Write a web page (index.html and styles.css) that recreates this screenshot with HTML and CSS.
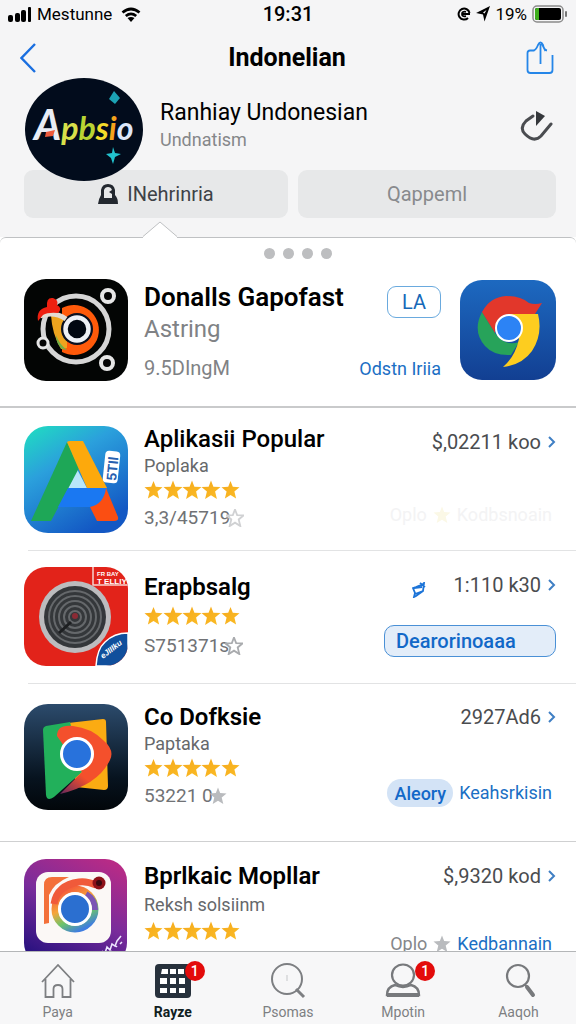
FILE: index.html
```html
<!DOCTYPE html>
<html lang="id">
  <head>
    <meta charset="UTF-8" />
    <meta name="viewport" content="width=device-width, initial-scale=1.0" />
    <title>Indonelian</title>
    <link rel="stylesheet" href="styles.css">
  </head>
  <body>
    <svg class="defs" aria-hidden="true">
      <defs>
        <linearGradient id="gold" x1="0" y1="0" x2="1" y2="1">
          <stop offset="0" stop-color="#f5a81c" />
          <stop offset="1" stop-color="#fbbd25" />
        </linearGradient>
        <symbol id="star" viewBox="0 0 20 20">
          <path d="M10 .5l2.4 6.2 7.1.4-5.4 4.5 1.8 7.4L10 15.2 4.1 19l1.800-7.400L.5 7.100l7.100-.4z" />
        </symbol>
        <symbol id="stars" viewBox="0 0 96 20">
          <use href="#star" width="19" height="20" />
          <use href="#star" x="19" width="20" height="20" />
          <use href="#star" x="38" width="20" height="20" />
          <use href="#star" x="57" width="20" height="20" />
          <use href="#star" x="77" width="19" height="20" />
        </symbol>
        <symbol id="chevron" viewBox="0 0 8 14">
          <path d="M1 2l5 5-5 5" fill="none" stroke="#3f7fc4" stroke-width="2" />
        </symbol>
      </defs>
    </svg>

    <header class="top">
      <div class="status">
        <div class="status-left">
          <svg width="24" height="16" viewBox="0 0 24 16">
            <rect x="0" y="9" width="5" height="7" rx="2" />
            <rect x="7" y="7" width="5" height="9" rx="2" />
            <rect x="13" y="4" width="5" height="12" rx="2" />
            <rect x="20" y="1" width="3" height="15" rx="1" />
          </svg>
          <span>Mestunne</span>
          <svg class="wifi" width="20" height="15" viewBox="0 0 20 15">
            <path d="M1.500 5.500q8.500-7 17 0M4.800 9q5.200-4.200 10.400 0" fill="none" stroke="#000" stroke-width="2.800" />
            <path d="M6.500 11q3.500-2.200 7 0L10 15z" />
          </svg>
        </div>
        <span class="clock">19:31</span>
        <div class="status-right">
          <svg width="14" height="14" viewBox="0 0 14 14">
            <path d="M12.500 6A5.500 5.500 0 1 0 11 11" fill="none" stroke="#000" stroke-width="2" />
            <path d="M4.500 7h8.500M9 4.800Q5 4 5 7t4 2.200" fill="none" stroke="#000" stroke-width="1.800" />
          </svg>
          <svg width="14" height="16" viewBox="0 0 14 16">
            <path d="M14 0L8.500 15.500 7 8.500 0 7zM10.500 4L7 6.500l1.500 1z" fill-rule="evenodd" />
          </svg>
          <span>19%</span>
          <svg width="36" height="18" viewBox="0 0 36 18">
            <rect x="1" y="1" width="30" height="16" rx="4" fill="#f5f5f6" stroke="#8b8b8b" stroke-width="1.500" />
            <rect x="3" y="3" width="26" height="12" rx="2" />
            <path d="M5 3h2v12H5a2 2 0 0 1-2-2V5a2 2 0 0 1 2-2z" fill="#3fae1d" />
            <rect x="33" y="6" width="2" height="6" rx="1" fill="#777" />
          </svg>
        </div>
      </div>

      <div class="nav">
        <a href="#" class="back" aria-label="Kembali">
          <svg width="16" height="30" viewBox="0 0 16 30">
            <path d="M15 1L1.500 15 15 29" fill="none" stroke="#1a6fe0" stroke-width="2.400" />
          </svg>
        </a>
        <h1>Indonelian</h1>
        <button class="icon-btn" aria-label="Bagikan">
          <svg width="28" height="34" viewBox="0 0 28 34">
            <path d="M8.500 9.500H4Q1.500 9.500 1.500 12v17q0 3 3 3h19q3 0 3-3V14M14.500 23V3M7.500 9.500Q10 9 12 4q2.500-5 5 0 1 5 4 5.500M16 3l3.500 7" fill="none" stroke="#2586e8" stroke-width="1.800" />
          </svg>
        </button>
      </div>

      <div class="profile">
        <svg class="avatar" width="118" height="103" viewBox="0 0 118 103">
          <ellipse cx="59" cy="51.500" rx="59" ry="51.500" fill="#020c1c" />
          <text x="9" y="62" class="avatar-text"><tspan fill="#e9edf5" class="avatar-cap">A</tspan><tspan fill="#d8e04a">p</tspan><tspan fill="#b9d433">b</tspan><tspan fill="#f4dc2a">s</tspan><tspan fill="#f5a31c">i</tspan><tspan fill="#dce6fa">o</tspan></text>
          <path d="M21 54l9-2-2 6-8 1z" fill="#ec5a3c" />
          <path d="M89 13l6 7-5 6-6-5z" fill="#1ca3b4" />
          <path d="M88 69l2 6 6 1-6 3-2 7-2-6-5-4 6-1z" fill="#22c3cf" />
        </svg>
        <div class="profile-text">
          <p class="profile-name">Ranhiay Undonesian</p>
          <p class="profile-sub">Undnatism</p>
        </div>
        <button class="icon-btn" aria-label="Muat ulang">
          <svg width="34" height="34" viewBox="0 0 34 34">
            <path d="M13 7L6 12Q-1 19 5 25q9 9 16 2L31 15" fill="none" stroke="#4a4c50" stroke-width="3" stroke-linecap="round" />
            <path d="M16 2l9 5-9 10z" fill="#35383c" />
          </svg>
        </button>
      </div>

      <div class="actions">
        <button class="action">
          <svg width="20" height="22" viewBox="0 0 20 22">
            <path d="M0 21q1-6 3-9V7q1-6 7-6t7 6v5q3 3 3 9zM6 15h8V7q-1-3-4-3T6 7z" fill="#23282f" fill-rule="evenodd" />
            <path d="M11 9l3-2v4z" fill="#23282f" />
          </svg>
          INehrinria
        </button>
        <button class="action muted">Qappeml</button>
      </div>
    </header>

    <main class="content">
      <section class="featured">
        <svg class="notch" width="34" height="17" viewBox="0 0 34 17">
          <path d="M0 16L17 1l17 15v1H0z" fill="#fff" />
          <path d="M0 15.500L17 1l17 14.500" fill="none" stroke="#bfc1c3" />
        </svg>
        <div class="dots"><i></i><i></i><i></i><i></i></div>
        <div class="featured-row">
          <svg class="app-icon" width="104" height="102" viewBox="0 0 104 102">
            <rect width="104" height="102" rx="22" fill="#030504" />
            <circle cx="52" cy="50" r="33" fill="none" stroke="#d6d6d6" stroke-width="5" />
            <path d="M38 29A25 25 0 1 1 38 73z" fill="#ff5a0a" />
            <path d="M27 36l16 4v29l-6 1Q28 55 27 36z" fill="#eea41e" />
            <path d="M32 56q3 9 11 15l-5-1q-6-5-6-14z" fill="#75b044" />
            <circle cx="53" cy="50" r="16" fill="#0a1020" />
            <circle cx="53" cy="50" r="11.500" fill="#020812" stroke="#eef1f6" stroke-width="4.500" />
            <path d="M16 37q14-5 26 3" fill="none" stroke="#e4ddd2" stroke-width="5" />
            <path d="M14 42q-2-12 9-14-1-10 6-9 6 2 4 7 6 3 1 8-10-1-15 2z" fill="#ee2010" />
            <g fill="#050505" stroke="#e6e6e6" stroke-width="4">
              <circle cx="84" cy="17" r="6" />
              <circle cx="83" cy="84" r="6" />
              <circle cx="19" cy="64" r="5" stroke-width="3" />
            </g>
          </svg>
          <div class="featured-info">
            <h2 class="name">Donalls Gapofast</h2>
            <p class="kind">Astring</p>
            <p class="size">9.5DIngM</p>
          </div>
          <div class="featured-side">
            <button class="tag-outline">LA</button>
            <a href="#" class="link">Odstn Iriia</a>
          </div>
          <svg class="app-icon" width="96" height="100" viewBox="0 0 96 100">
            <defs>
              <linearGradient id="navy" x1="0" y1="0" x2="0" y2="1">
                <stop offset="0" stop-color="#1d69c0" />
                <stop offset="1" stop-color="#123f92" />
              </linearGradient>
            </defs>
            <rect width="96" height="100" rx="22" fill="url(#navy)" />
            <path d="M22 32L35 53q10 14 24 9l-8 13q-17 1-26-9-13-15-3-34z" fill="#27a35a" />
            <path d="M22 32Q30 17 46 16q15 0 23 7 6 2 13 0l-7 11H49Q35 37 35 53z" fill="#e2372b" />
            <path d="M49 34h29q5 20-6 37-10 14-29 16 12-10 16-28z" fill="#fdcd1f" />
            <circle cx="49" cy="48" r="13" fill="#2c83f5" stroke="#fff" stroke-width="2" />
          </svg>
        </div>
      </section>

      <ul class="app-list">
        <li class="app">
          <svg class="app-icon" width="104" height="107" viewBox="0 0 104 107">
            <defs>
              <linearGradient id="sky" x1="0" y1="0" x2=".6" y2="1">
                <stop offset="0" stop-color="#1fe0c0" />
                <stop offset=".4" stop-color="#2ba0dc" />
                <stop offset="1" stop-color="#1358c4" />
              </linearGradient>
            </defs>
            <rect width="104" height="107" rx="24" fill="url(#sky)" />
            <path d="M53 43l10 19H44z" fill="#b9e6fa" />
            <path d="M43 16l12 26L27 95H7z" fill="#1ea757" />
            <path d="M44 62h39q-2 18-17 19H34z" fill="#1a78f2" />
            <path d="M43 16q1-1 3-1h13l24 47H63z" fill="#fda90c" />
            <path d="M82 62l12 29q1 4-4 4H73l-7-14q14-3 16-19z" fill="#fb4e12" />
            <rect x="80" y="25" width="15" height="32" rx="4" fill="#fff" transform="rotate(6 87 41)" />
            <text class="sticker" transform="translate(92 55) rotate(-84)">5TIl</text>
          </svg>
          <div class="info">
            <h2 class="name">Aplikasii Popular</h2>
            <p class="sub">Poplaka</p>
            <svg class="stars" role="img" aria-label="5 bintang"><use href="#stars" /></svg>
            <p class="count">3,3/45719<svg class="star pale"><use href="#star" /></svg></p>
          </div>
          <div class="side">
            <a href="#" class="price">$,02211 koo <svg class="chev"><use href="#chevron" /></svg></a>
            <p class="meta ghost">Oplo <svg class="star"><use href="#star" /></svg> <span>Kodbsnoain</span></p>
          </div>
        </li>

        <li class="app wide-gap">
          <svg class="app-icon" width="104" height="99" viewBox="0 0 104 99">
            <clipPath id="round"><rect width="104" height="99" rx="22" /></clipPath>
            <g clip-path="url(#round)">
              <rect width="104" height="99" fill="#e2231a" />
              <path d="M69 0v18h35" fill="none" stroke="#f6d5d0" stroke-width="1.500" />
              <text x="73" y="9" class="label">FR BAY</text>
              <text x="73" y="17" class="label big">T ELLIY</text>
              <circle cx="51" cy="50" r="36" fill="#bcbcbe" />
              <circle cx="51" cy="50" r="31" fill="#34373a" />
              <g fill="none" stroke="#65686b" stroke-width="2">
                <circle cx="51" cy="50" r="26" />
                <circle cx="51" cy="50" r="21" />
                <circle cx="51" cy="50" r="16" />
                <circle cx="51" cy="50" r="11" />
                <circle cx="51" cy="50" r="6" />
              </g>
              <path d="M35 66l12-11" stroke="#1d1f21" stroke-width="3" />
              <circle cx="51" cy="49" r="3" fill="#8b2b35" />
              <path d="M72 99q1-17 9-24 9-9 23-9v33z" fill="#104f9c" stroke="#fff" stroke-width="1.500" />
              <text class="label blue" transform="translate(79 92) rotate(-38)">eJIIIku</text>
            </g>
          </svg>
          <div class="info">
            <h2 class="name">Erapbsalg</h2>
            <svg class="stars" role="img" aria-label="5 bintang"><use href="#stars" /></svg>
            <p class="count">S751371s<svg class="star hollow"><use href="#star" /></svg></p>
          </div>
          <div class="side">
            <div class="price-row">
              <svg class="mark" width="14" height="16" viewBox="0 0 14 16">
                <path d="M1 6l3-1 7-3 1-1-1 8-7 5-2 1 1-4zM2 6l8-1M3 12l8-3M8 1l5 4" fill="none" stroke="#1c74d8" stroke-width="1.800" />
              </svg>
              <a href="#" class="price">1:110 k30 <svg class="chev"><use href="#chevron" /></svg></a>
            </div>
            <button class="wide-btn">Dearorinoaaa</button>
          </div>
        </li>

        <li class="app tall">
          <svg class="app-icon" width="104" height="106" viewBox="0 0 104 106">
            <defs>
              <linearGradient id="night" x1="0" y1="0" x2="0" y2="1">
                <stop offset="0" stop-color="#2c4b6c" />
                <stop offset=".7" stop-color="#07131f" />
                <stop offset="1" stop-color="#02060a" />
              </linearGradient>
              <linearGradient id="flame" x1=".6" y1="0" x2="0" y2="1">
                <stop offset=".6" stop-color="#f4502c" />
                <stop offset="1" stop-color="#5b2560" />
              </linearGradient>
            </defs>
            <rect width="104" height="106" rx="24" fill="url(#night)" />
            <path d="M44 19l35-4q3 0 3 3l2 64q0 4-4 4l-28-3z" fill="#fbab12" />
            <path d="M22 22l24-4 12 50-28 25q-7 5-8-2L19 26q0-3 3-4z" fill="#22b05b" />
            <path d="M33 32q0-12 16-10 18 2 30 14 12 10 7 20-12 25-50 34l22-22z" fill="url(#flame)" />
            <circle cx="53" cy="50" r="15.500" fill="#2872dc" stroke="#fff" stroke-width="3" />
          </svg>
          <div class="info">
            <h2 class="name">Co Dofksie</h2>
            <p class="sub">Paptaka</p>
            <svg class="stars" role="img" aria-label="5 bintang"><use href="#stars" /></svg>
            <p class="count">53221 0<svg class="star"><use href="#star" /></svg></p>
          </div>
          <div class="side">
            <a href="#" class="price">2927Ad6 <svg class="chev"><use href="#chevron" /></svg></a>
            <p class="meta"><button class="pill">Aleory</button><a href="#" class="link">Keahsrkisin</a></p>
          </div>
        </li>

        <li class="app last">
          <svg class="app-icon" width="104" height="106" viewBox="0 0 104 106">
            <defs>
              <linearGradient id="violet" x1=".8" y1="0" x2=".3" y2="1">
                <stop offset="0" stop-color="#b82b86" />
                <stop offset=".5" stop-color="#7a2c9b" />
                <stop offset="1" stop-color="#2a1280" />
              </linearGradient>
              <linearGradient id="rainbow" x1=".2" y1="0" x2=".7" y2="1">
                <stop offset="0" stop-color="#f4523a" />
                <stop offset=".4" stop-color="#f6a53a" />
                <stop offset=".7" stop-color="#6cc46a" />
                <stop offset="1" stop-color="#3f7de0" />
              </linearGradient>
            </defs>
            <rect width="103" height="106" rx="22" fill="url(#violet)" />
            <rect x="12" y="13" width="75" height="71" rx="12" fill="#fbf8f6" />
            <path d="M20 65V26q0-8 8-8h17q-15 6-20 18v28z" fill="#f3703a" />
            <circle cx="51" cy="50" r="20" fill="none" stroke="url(#rainbow)" stroke-width="7" />
            <path d="M30 45q3-19 25-22 8-1 17 3" fill="none" stroke="#f05a3a" stroke-width="7" />
            <path d="M62 35q9 5 9 16" fill="none" stroke="#7b55b4" stroke-width="6" />
            <circle cx="51" cy="50" r="15.500" fill="#2b6fd0" stroke="#fff" stroke-width="3" />
            <circle cx="75" cy="24" r="6.500" fill="#8e1119" />
            <circle cx="75" cy="24" r="3" fill="#3a0810" />
            <path d="M78 92l3 2 2-6 3 3 2-6 3 2 2-5 4-5M86 94l2-2M92 87l1 1M96 85l2-2" fill="none" stroke="#eee6ff" stroke-width="1.500" />
          </svg>
          <div class="info">
            <h2 class="name">Bprlkaic Mopllar</h2>
            <p class="sub">Reksh solsiinm</p>
            <svg class="stars" role="img" aria-label="5 bintang"><use href="#stars" /></svg>
          </div>
          <div class="side">
            <a href="#" class="price">$,9320 kod <svg class="chev"><use href="#chevron" /></svg></a>
            <p class="meta">Oplo <svg class="star"><use href="#star" /></svg> <a href="#" class="link">Kedbannain</a></p>
          </div>
        </li>
      </ul>
    </main>

    <nav class="tabs">
      <a href="#" class="tab">
        <svg width="36" height="36" viewBox="0 0 36 36">
          <path d="M2 19L18 2l16 17M5.500 16v18h8V26q0-4 4.500-4t4.500 4v8h8V16" fill="none" stroke="#7d7f82" stroke-width="1.800" />
        </svg>
        <span>Paya</span>
      </a>
      <a href="#" class="tab active">
        <svg width="36" height="36" viewBox="0 0 36 36">
          <rect x="0" y="1" width="36" height="34" rx="4" fill="#27313c" />
          <path d="M7 6h6v5H6zM15 6h6v5h-6zM23 6h6v5h-6zM5 15h7v6H5zM15 15h6v6h-6zM24 15h6v6h-6zM5 25h7v5H5zM15 25h6v5h-6zM24 25h6v5h-6z" fill="#fff" />
        </svg>
        <span>Rayze</span>
        <b class="badge">1</b>
      </a>
      <a href="#" class="tab">
        <svg width="36" height="36" viewBox="0 0 36 36">
          <circle cx="17" cy="16" r="15" fill="none" stroke="#7d7f82" stroke-width="2" />
          <path d="M26 26l8 8" stroke="#7d7f82" stroke-width="3" />
          <path d="M17 12v6" stroke="#c5c7c9" />
        </svg>
        <span>Psomas</span>
      </a>
      <a href="#" class="tab">
        <svg width="36" height="36" viewBox="0 0 36 36">
          <ellipse cx="18" cy="12" rx="11" ry="10.500" fill="none" stroke="#77797c" stroke-width="2.200" />
          <path d="M10 22q-8 2-8 10h32q0-8-8-10-8 4-16 0z" fill="none" stroke="#77797c" stroke-width="2.400" />
          <path d="M2 32h32" stroke="#77797c" stroke-width="4" />
        </svg>
        <span>Mpotin</span>
        <b class="badge">1</b>
      </a>
      <a href="#" class="tab">
        <svg width="36" height="36" viewBox="0 0 36 36">
          <circle cx="18" cy="13" r="11" fill="none" stroke="#77797c" stroke-width="2.200" />
          <path d="M25 22l3 2" stroke="#77797c" stroke-width="2" />
          <path d="M27 24l6 8" stroke="#77797c" stroke-width="4" stroke-linecap="round" />
        </svg>
        <span>Aaqoh</span>
      </a>
    </nav>
  </body>
</html>
```
FILE: styles.css
```css
* {
  box-sizing: border-box;
}
body {
  margin: 0;
  height: 100vh;
  display: flex;
  flex-direction: column;
  overflow: hidden;
  font-family: Roboto, "Liberation Sans", sans-serif;
  background: #fff;
  color: #000;
}
h1,
h2,
p,
ul {
  margin: 0;
  padding: 0;
}
a {
  color: inherit;
  text-decoration: none;
}
button {
  font-family: inherit;
  cursor: pointer;
  border: none;
  padding: 0;
  background: none;
}
svg {
  display: block;
  flex: none;
}
.defs {
  position: absolute;
  width: 0;
  height: 0;
}

/* header */
.top {
  background: #f5f5f6;
  padding-bottom: 19px;
}
.status {
  display: grid;
  grid-template-columns: 1fr auto 1fr;
  align-items: center;
  height: 28px;
  padding: 0 8px;
  font-size: 17px;
}
.status-left,
.status-right {
  display: flex;
  align-items: center;
  gap: 5px;
}
.status-right {
  justify-content: flex-end;
}
.wifi {
  margin-left: 4px;
}
.clock {
  font-size: 20px;
  font-weight: 500;
}
.nav {
  display: grid;
  grid-template-columns: 1fr auto 1fr;
  align-items: center;
  height: 40px;
  margin-top: 10px;
  padding: 0 22px 0 20px;
}
.nav h1 {
  font-size: 25px;
  line-height: 32px;
  font-weight: 700;
}
.icon-btn {
  justify-self: end;
}
.profile {
  position: relative;
  display: flex;
  align-items: center;
  padding: 0 22px 0 25px;
}
.profile .icon-btn {
  margin-bottom: 8px;
}
.avatar-text {
  font-family: Lato, "Open Sans", sans-serif;
  font-size: 32px;
  font-weight: 700;
  font-style: italic;
}
.avatar-cap {
  font-size: 42px;
}
.profile-text {
  flex: 1;
  margin: 0 0 8px 17px;
}
.profile-name {
  font-size: 23px;
  line-height: 28px;
}
.profile-sub {
  font-size: 18px;
  line-height: 26px;
  color: #85878a;
}
.actions {
  display: grid;
  grid-template-columns: 264fr 258fr;
  gap: 10px;
  margin-top: -11px;
  padding: 0 20px 0 24px;
}
.action {
  display: flex;
  align-items: center;
  justify-content: center;
  gap: 9px;
  height: 48px;
  border-radius: 9px;
  background: #e7e8e9;
  color: #3e4247;
  font-size: 20px;
}
.action.muted {
  color: #888a8d;
}

/* list */
.content {
  flex: 1;
  min-height: 0;
}
.featured {
  position: relative;
  border-top: 1px solid #bfc1c3;
  border-bottom: 2px solid #c9cacb;
  border-radius: 6px 6px 0 0;
  background: #fff;
  padding: 10px 20px 25px 24px;
}
.notch {
  position: absolute;
  top: -17px;
  left: 143px;
}
.dots {
  display: flex;
  justify-content: center;
  gap: 8px;
  padding-left: 15px;
}
.dots i {
  width: 11px;
  height: 11px;
  border-radius: 50%;
  background: #bdbec0;
}
.featured-row {
  display: flex;
  align-items: center;
  margin-top: 20px;
}
.featured-info {
  flex: 1;
  padding: 3px 0 0 16px;
}
.name {
  font-size: 24px;
  line-height: 28px;
  font-weight: 500;
  white-space: nowrap;
}
.featured .name {
  font-size: 26px;
  font-weight: 600;
}
.kind {
  font-size: 24px;
  line-height: 36px;
  color: #808285;
}
.size {
  margin-top: 8px;
  font-size: 20px;
  line-height: 26px;
  color: #808285;
}
.featured-side {
  display: flex;
  flex-direction: column;
  align-items: flex-end;
  gap: 40px;
  margin-right: 19px;
  padding-top: 5px;
}
.tag-outline {
  width: 54px;
  height: 32px;
  border: 1px solid #6aaade;
  border-radius: 9px;
  color: #1668b8;
  font-size: 20px;
}
.link {
  color: #1b6fc4;
  font-size: 18px;
}
.app-list {
  list-style: none;
}
.app {
  display: flex;
  align-items: center;
  padding: 17px 20px 17px 24px;
}
.app + .app {
  background: linear-gradient(#e2e3e4, #e2e3e4) 28px 0 / 100% 1px no-repeat;
}
.app.tall {
  padding-top: 20px;
  padding-bottom: 30px;
}
.app.last {
  align-items: flex-start;
  border-top: 1px solid #cfd0d1;
  background: none;
}
.info {
  flex: 1;
  display: flex;
  flex-direction: column;
  gap: 2px;
  padding-left: 16px;
}
.wide-gap .info,
.last .info {
  gap: 4px;
}
.wide-gap .name,
.tall .name,
.last .name {
  font-weight: 600;
}
.sub {
  font-size: 18px;
  line-height: 22px;
  color: #66686b;
}
.last .info {
  padding-top: 3px;
}
.stars {
  width: 96px;
  height: 22px;
  fill: url(#gold);
}
.count {
  display: flex;
  align-items: center;
  font-size: 19px;
  line-height: 30px;
  color: #707275;
}
.star {
  width: 18px;
  height: 18px;
  fill: #b9bbbe;
}
.star.hollow,
.star.pale {
  fill: none;
  stroke: #a9abae;
  stroke-width: 2px;
}
.star.pale {
  stroke: #d0d1d3;
}
.count .star {
  margin-left: -4px;
}
.side {
  align-self: stretch;
  display: flex;
  flex-direction: column;
  align-items: flex-end;
  justify-content: space-between;
  padding: 5px 0;
}
.price,
.price-row,
.meta {
  display: flex;
  align-items: center;
}
.price {
  gap: 7px;
  font-size: 20px;
  line-height: 24px;
  color: #4a4c4f;
}
.price-row {
  gap: 28px;
}
.mark {
  margin-top: 10px;
}
.chev {
  width: 8px;
  height: 14px;
}
.meta {
  gap: 6px;
  padding-right: 4px;
  font-size: 18px;
  line-height: 26px;
  color: #85878a;
}
.ghost {
  color: #f3f3f4;
}
.ghost .star {
  fill: #fbf8e6;
}
.wide-btn {
  width: 172px;
  height: 32px;
  padding-left: 11px;
  border: 1px solid #4a90d6;
  border-radius: 10px;
  background: #e3edf9;
  color: #1268c8;
  font-size: 20px;
  font-weight: 500;
  text-align: left;
}
.wide-gap .side {
  padding: 5px 0 9px;
}
.tall .side {
  padding: 2px 0 4px;
}
.last .side {
  padding: 5px 0 8px;
}
.pill {
  height: 28px;
  padding: 0 7px;
  border-radius: 14px;
  background: #d3e3f6;
  color: #1268c8;
  font-size: 18px;
  font-weight: 500;
}
.sticker {
  font-family: "Liberation Sans", sans-serif;
  font-size: 14px;
  font-weight: 700;
  fill: #2660b0;
}
.label {
  font-family: "Liberation Sans", sans-serif;
  font-size: 6px;
  font-weight: 700;
  fill: #fff;
}
.label.big {
  font-size: 8px;
}
.label.blue {
  font-size: 8px;
  font-style: italic;
}

/* bottom tabs */
.tabs {
  position: relative;
  display: grid;
  grid-template-columns: repeat(5, 1fr);
  height: 73px;
  border-top: 1px solid #b4b6b8;
  background: #f7f7f8;
}
.tab {
  position: relative;
  display: flex;
  flex-direction: column;
  align-items: center;
  padding-top: 11px;
  font-size: 14px;
  line-height: 22px;
  color: #7d7f82;
}
.tab span {
  margin-top: 2px;
}
.tab.active {
  color: #10201f;
  font-weight: 700;
}
.badge {
  position: absolute;
  top: 9px;
  left: calc(50% + 12px);
  width: 20px;
  height: 20px;
  border-radius: 50%;
  background: #e30b0b;
  color: #fff;
  font-size: 14px;
  line-height: 20px;
  font-weight: 500;
  text-align: center;
}
```
